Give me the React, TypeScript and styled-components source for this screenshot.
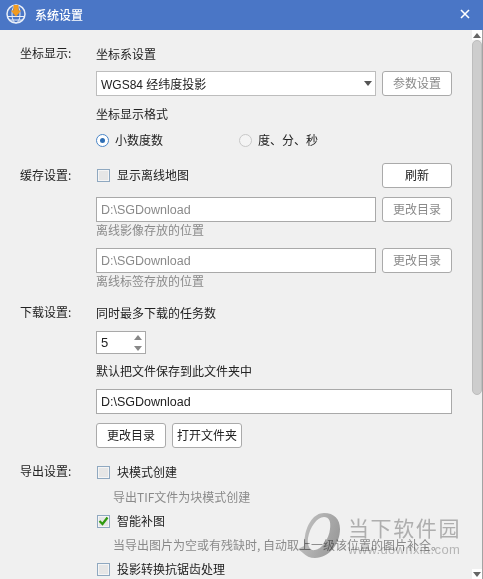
import React from "react";
import styled, { createGlobalStyle } from "styled-components";

const GlobalStyle = createGlobalStyle`
  html, body {
    margin: 0;
    padding: 0;
    background: #f0f0f0;
  }
  * {
    box-sizing: border-box;
  }
`;

const Window = styled.div`
  width: 483px;
  height: 579px;
  overflow: hidden;
  position: relative;
  display: flex;
  flex-direction: column;
  background: #f0f0f0;
  color: #222;
  font-family: "Noto Sans CJK SC", "Liberation Sans", sans-serif;
  font-size: 12px;
`;

const TitleBar = styled.div`
  height: 30px;
  flex: none;
  display: flex;
  align-items: center;
  padding: 0 13px 2px 6px;
  background: #4a76c6;
  color: #fff;
`;

const TitleText = styled.span`
  margin-left: 9px;
  font-size: 12px;
  font-weight: 500;
`;

const CloseButton = styled.div`
  margin-left: auto;
  display: flex;
`;

const Body = styled.div`
  flex: 1;
  min-height: 0;
  display: flex;
`;

const Content = styled.div`
  flex: 1;
  min-width: 0;
  overflow: hidden;
  padding: 15px 0 0 20px;
`;

const Section = styled.div<{ $gap?: number }>`
  display: grid;
  grid-template-columns: 76px 356px;
  margin-bottom: ${(p) => p.$gap ?? 0}px;
`;

const SectionLabel = styled.div<{ $height?: number }>`
  height: ${(p) => p.$height ?? 18}px;
  line-height: ${(p) => (p.$height ?? 18) - 2}px;
`;

const Column = styled.div`
  display: flex;
  flex-direction: column;
`;

const Line = styled.div<{ $height?: number; $top?: number }>`
  display: flex;
  align-items: center;
  flex: ${(p) => (p.$height ? "1" : "none")};
  height: ${(p) => p.$height ?? 18}px;
  padding-bottom: 2px;
  margin-top: ${(p) => p.$top ?? 0}px;
`;

const Field = styled.div<{ $muted?: boolean }>`
  height: 25px;
  flex: 1;
  display: flex;
  align-items: center;
  padding: 0 4px;
  background: #fff;
  border: 1px solid #a9a9a9;
  color: ${(p) => (p.$muted ? "#8a8a8a" : "#222")};
  font-family: "Liberation Sans", "Noto Sans CJK SC", sans-serif;
  font-size: 12.5px;
`;

const SelectField = styled(Field)`
  justify-content: space-between;
  padding-right: 3px;
  padding-bottom: 1px;
  border-color: #bdbdbd;
  font-size: 12px;
`;

const FlatButton = styled.div<{ $muted?: boolean }>`
  width: 70px;
  height: 25px;
  flex: none;
  display: flex;
  align-items: center;
  justify-content: center;
  padding-bottom: 2px;
  background: #fff;
  border: 1px solid #aaa;
  border-radius: 3px;
  color: ${(p) => (p.$muted ? "#8a8a8a" : "#222")};
`;

const FieldRow = styled.div<{ $top?: number }>`
  display: flex;
  gap: 6px;
  margin-top: ${(p) => p.$top ?? 0}px;
`;

const ButtonRow = styled.div`
  display: flex;
  gap: 6px;
  margin-top: 9px;
`;

const Radio = styled.span<{ $checked?: boolean }>`
  width: 13px;
  height: 13px;
  flex: none;
  display: flex;
  align-items: center;
  justify-content: center;
  margin: 2px 6px 0 0;
  border-radius: 50%;
  background: ${(p) => (p.$checked ? "#fff" : "#f4f4f4")};
  border: 1px solid ${(p) => (p.$checked ? "#4a86c8" : "#c8c8c8")};

  &::after {
    content: "";
    width: 5px;
    height: 5px;
    border-radius: 50%;
    background: ${(p) => (p.$checked ? "#2f6fb5" : "transparent")};
  }
`;

const RadioGroup = styled.div`
  display: grid;
  grid-template-columns: 143px 1fr;
  height: 18px;
  margin-top: 8px;
`;

const RadioItem = styled.div`
  display: flex;
  align-items: center;
  padding-bottom: 2px;
`;

const CheckBox = styled.span`
  width: 13px;
  height: 13px;
  flex: none;
  display: flex;
  align-items: center;
  justify-content: center;
  margin: 2px 7px 0 1px;
  background: #e6e6e6;
  border: 1px solid #8fa8c0;
  box-shadow: inset 0 0 0 1px #f5f5f5;
`;

const Hint = styled.div<{ $indent?: number; $top?: number }>`
  height: 18px;
  line-height: 16px;
  color: #8a8a8a;
  margin-left: ${(p) => p.$indent ?? 0}px;
  margin-top: ${(p) => p.$top ?? 0}px;
  white-space: nowrap;
`;

const Spinner = styled.div`
  width: 50px;
  height: 23px;
  margin-top: 9px;
  display: flex;
  align-items: center;
  justify-content: space-between;
  padding: 0 3px 0 4px;
  background: #fff;
  border: 1px solid #a9a9a9;
  font-family: "Liberation Sans", sans-serif;
  font-size: 13px;
`;

const SpinArrows = styled.div`
  display: flex;
  flex-direction: column;
  gap: 6px;
`;

const Arrow = styled.span<{ $down?: boolean; $color?: string }>`
  width: 0;
  height: 0;
  border-left: 4px solid transparent;
  border-right: 4px solid transparent;
  ${(p) => (p.$down ? "border-top" : "border-bottom")}: 5px solid ${(p) => p.$color ?? "#888"};
`;

const ScrollBar = styled.div`
  width: 11px;
  flex: none;
  display: flex;
  flex-direction: column;
  border-right: 1px solid #a3a3a3;
`;

const ScrollCap = styled.div`
  height: 10px;
  flex: none;
  display: flex;
  align-items: center;
  justify-content: center;
  background: #fff;
`;

const ScrollTrack = styled.div`
  flex: 1;
  background: #f0f0f0;
`;

const ScrollThumb = styled.div`
  height: 355px;
  flex: none;
  background: #cdcdcd;
  border-radius: 5px;
  border: 1px solid #bdbdbd;
`;

const Watermark = styled.div`
  position: absolute;
  left: 298px;
  top: 513px;
  display: flex;
  gap: 7px;
  white-space: nowrap;
  pointer-events: none;
  color: #a8a8a8;
  mix-blend-mode: multiply;
`;

const WatermarkText = styled.div`
  display: flex;
  flex-direction: column;
  padding-top: 1px;
`;

const WatermarkName = styled.div`
  font-size: 21px;
  line-height: 26px;
  letter-spacing: 1.6px;
  opacity: 0.8;
`;

const WatermarkUrl = styled.div`
  margin-top: 2px;
  font-family: "Liberation Sans", sans-serif;
  font-size: 13px;
  line-height: 15px;
  letter-spacing: 0.35px;
  opacity: 0.7;
`;

const Logo = () => (
  <svg width="20" height="20" viewBox="0 0 20 20">
    <circle cx="10" cy="10" r="9" fill="none" stroke="#e8eef8" strokeWidth="1.5" />
    <ellipse cx="10" cy="10" rx="4" ry="9" fill="none" stroke="#e8eef8" strokeWidth="1" />
    <path d="M1.5 12.5h17M3.5 16h13" stroke="#e8eef8" strokeWidth="1" />
    <path d="M7.5 1h5v5.5h2.8L10 12.5 4.7 6.5h2.8z" fill="#f19a1f" />
  </svg>
);

const Close = () => (
  <svg width="10" height="10" viewBox="0 0 10 10">
    <path d="M1 1l8 8M9 1l-8 8" stroke="#fff" strokeWidth="1.6" />
  </svg>
);

const Check = () => (
  <svg width="11" height="10" viewBox="0 0 11 10">
    <path d="M1.5 5l3 3 5-6.5" fill="none" stroke="#2f9a10" strokeWidth="2.2" />
  </svg>
);

const WatermarkLogo = () => (
  <svg width="43" height="46" viewBox="0 0 43 46">
    <defs>
      <linearGradient id="ring" x1="0" y1="0" x2="1" y2="0.4">
        <stop offset="0" stopColor="#d4d4d4" />
        <stop offset="1" stopColor="#a6a6a6" />
      </linearGradient>
    </defs>
    <path
      fillRule="evenodd"
      fill="url(#ring)"
      d="M26 0c10 0 16 6 16 16 0 15-11 29-25 29-5 0-9-2-12-5-2-2-4-3-5-4l6-3c0-2 0-6 1-10C9 11 16 0 26 0zm0 4c-7 0-14 10-16 21-1 8 2 13 7 12 7-1 14-11 15-21 1-8-1-12-6-12z"
    />
  </svg>
);

export default function App() {
  return (
    <>
      <GlobalStyle />
      <Window>
        <TitleBar>
          <Logo />
          <TitleText>系统设置</TitleText>
          <CloseButton>
            <Close />
          </CloseButton>
        </TitleBar>
        <Body>
          <Content>
            <Section $gap={14}>
              <SectionLabel>坐标显示:</SectionLabel>
              <Column>
                <Line>坐标系设置</Line>
                <FieldRow $top={8}>
                  <SelectField>
                    WGS84 经纬度投影
                    <Arrow $down $color="#555" />
                  </SelectField>
                  <FlatButton $muted>参数设置</FlatButton>
                </FieldRow>
                <Line $top={9}>坐标显示格式</Line>
                <RadioGroup>
                  <RadioItem>
                    <Radio $checked />
                    小数度数
                  </RadioItem>
                  <RadioItem>
                    <Radio />
                    度、分、秒
                  </RadioItem>
                </RadioGroup>
              </Column>
            </Section>
            <Section $gap={13}>
              <SectionLabel $height={25}>缓存设置:</SectionLabel>
              <Column>
                <FieldRow>
                  <Line $height={25}>
                    <CheckBox />
                    显示离线地图
                  </Line>
                  <FlatButton>刷新</FlatButton>
                </FieldRow>
                <FieldRow $top={9}>
                  <Field $muted>D:\SGDownload</Field>
                  <FlatButton $muted>更改目录</FlatButton>
                </FieldRow>
                <Hint>离线影像存放的位置</Hint>
                <FieldRow $top={8}>
                  <Field $muted>D:\SGDownload</Field>
                  <FlatButton $muted>更改目录</FlatButton>
                </FieldRow>
                <Hint>离线标签存放的位置</Hint>
              </Column>
            </Section>
            <Section $gap={15}>
              <SectionLabel>下载设置:</SectionLabel>
              <Column>
                <Line>同时最多下载的任务数</Line>
                <Spinner>
                  5
                  <SpinArrows>
                    <Arrow />
                    <Arrow $down />
                  </SpinArrows>
                </Spinner>
                <Line $top={8}>默认把文件保存到此文件夹中</Line>
                <FieldRow $top={9}>
                  <Field>D:\SGDownload</Field>
                </FieldRow>
                <ButtonRow>
                  <FlatButton>更改目录</FlatButton>
                  <FlatButton>打开文件夹</FlatButton>
                </ButtonRow>
              </Column>
            </Section>
            <Section>
              <SectionLabel>导出设置:</SectionLabel>
              <Column>
                <Line>
                  <CheckBox />
                  块模式创建
                </Line>
                <Hint $indent={17} $top={8}>导出TIF文件为块模式创建</Hint>
                <Line $top={5}>
                  <CheckBox>
                    <Check />
                  </CheckBox>
                  智能补图
                </Line>
                <Hint $indent={17} $top={7}>当导出图片为空或有残缺时, 自动取上一级该位置的图片补全。</Hint>
                <Line $top={5}>
                  <CheckBox />
                  投影转换抗锯齿处理
                </Line>
              </Column>
            </Section>
          </Content>
          <ScrollBar>
            <ScrollCap>
              <Arrow $color="#666" />
            </ScrollCap>
            <ScrollThumb />
            <ScrollTrack />
            <ScrollCap>
              <Arrow $down $color="#666" />
            </ScrollCap>
          </ScrollBar>
        </Body>
        <Watermark>
          <WatermarkLogo />
          <WatermarkText>
            <WatermarkName>当下软件园</WatermarkName>
            <WatermarkUrl>www.downxia.com</WatermarkUrl>
          </WatermarkText>
        </Watermark>
      </Window>
    </>
  );
}
